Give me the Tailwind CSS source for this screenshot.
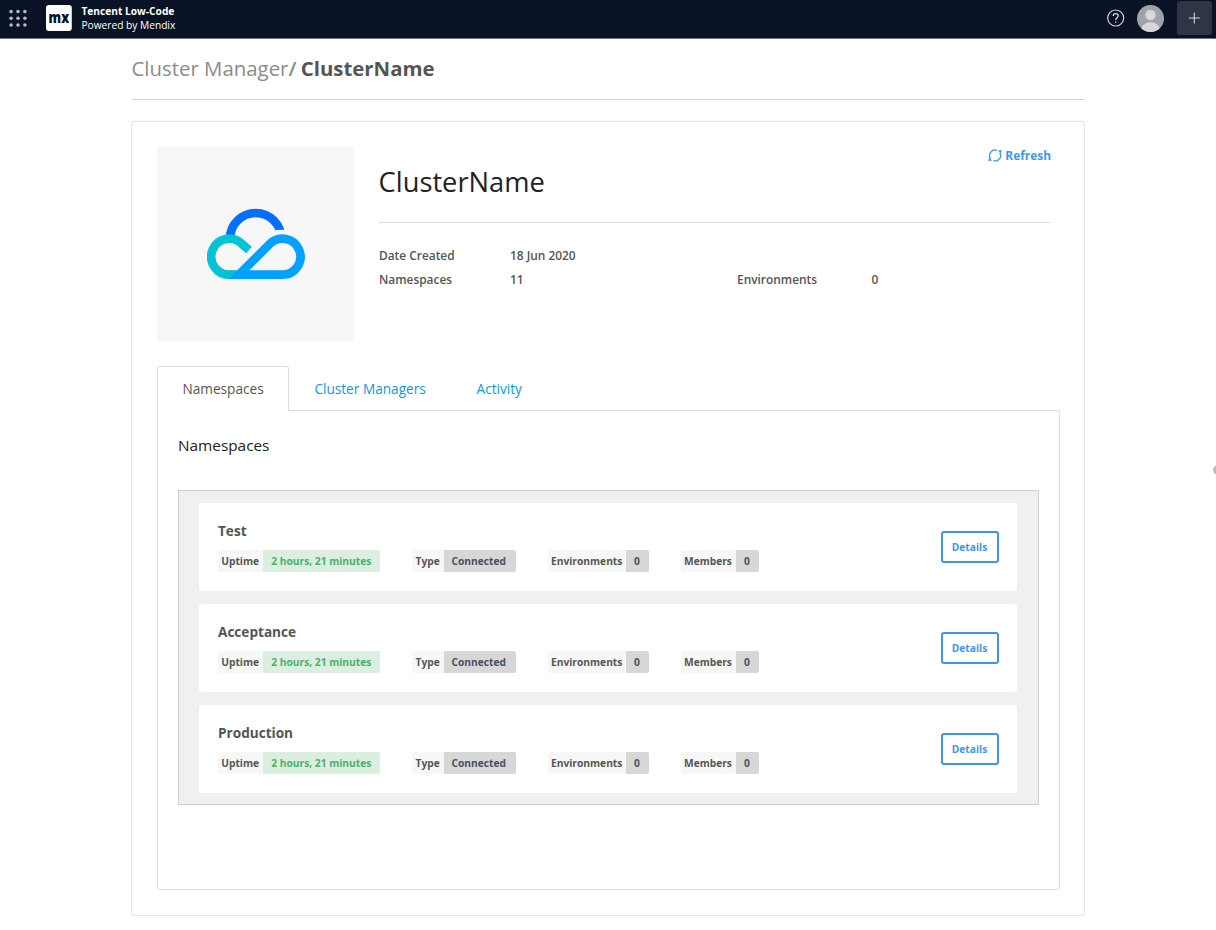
<!DOCTYPE html>
<html lang="en">
<head>
<meta charset="utf-8">
<title>Cluster Manager</title>
<script src="https://cdn.jsdelivr.net/npm/@tailwindcss/browser@4"></script>
</head>
<body class="relative h-[930px] w-[1216px] overflow-hidden bg-white font-['Open_Sans',sans-serif] text-[#555]">

<header class="flex h-[39px] items-start border-b border-[#6c717c] bg-[#0a1326] text-white">
  <svg class="ml-2 mt-2 h-5 w-5" viewBox="0 0 20 20" fill="#b4b8bf">
    <circle cx="3.1" cy="3.6" r="1.8"/><circle cx="10" cy="3.6" r="1.8"/><circle cx="16.9" cy="3.6" r="1.8"/>
    <circle cx="3.1" cy="10.3" r="1.8"/><circle cx="10" cy="10.3" r="1.8"/><circle cx="16.9" cy="10.3" r="1.8"/>
    <circle cx="3.1" cy="17" r="1.8"/><circle cx="10" cy="17" r="1.8"/><circle cx="16.9" cy="17" r="1.8"/>
  </svg>
  <svg class="ml-[18px] mt-[5px] h-[26px] w-[26px] overflow-visible" viewBox="0 0 26 26">
    <rect width="25.8" height="26" rx="3" fill="#fff"/>
    <text x="2.6" y="17.6" textLength="20.6" lengthAdjust="spacingAndGlyphs" font-family="Open Sans, sans-serif" font-weight="800" font-size="16.5" fill="#0a1326">mx</text>
  </svg>
  <div class="ml-[9.4px] mt-1 text-[10.2px] leading-[14px]">
    <div class="font-bold">Tencent Low-Code</div>
    <div>Powered by Mendix</div>
  </div>
  <div class="ml-auto mr-[4.5px] flex items-start">
    <svg class="mt-[9px] h-[18px] w-[18px]" viewBox="0 0 18 18" fill="none" stroke="#d3d5d9" stroke-width="1.2">
      <circle cx="8.700" cy="9" r="8"/>
      <path d="M6.200 7.1C6.200 5.5 7.200 4.6 8.700 4.6s2.5.9 2.5 2.2c0 1.9-2.4 1.9-2.4 4.1" stroke-width="1.3"/>
      <circle cx="8.800" cy="13" r=".5" fill="#d3d5d9" stroke-width=".5"/>
    </svg>
    <svg class="ml-[12px] mt-[4.5px] h-[27px] w-[27px]" viewBox="0 0 27 27">
      <defs><clipPath id="face"><circle cx="13.5" cy="13.5" r="13.5"/></clipPath></defs>
      <g clip-path="url(#face)">
        <rect width="27" height="27" fill="#9fa3a9"/>
        <circle cx="13.5" cy="10" r="5.2" fill="#d6d7da"/>
        <path d="M3.5 28C3.5 21 8 17.3 13.5 17.3S23.500 21 23.500 28Z" fill="#d6d7da"/>
      </g>
    </svg>
    <div class="ml-[13px] mt-px flex h-[34px] w-[34.5px] items-center justify-center rounded-[3px] bg-[#2e3544]">
      <svg class="h-3 w-3" viewBox="0 0 12 12" stroke="#d3d5d9" stroke-width="1.1"><path d="M6.300 .4v11.200M.7 6h11.200"/></svg>
    </div>
  </div>
</header>

<main class="ml-[131px] w-[954px]">
  <h1 class="ml-[0.5px] flex h-[60px] items-center pb-0.5 text-[20.4px] leading-7 text-[#8b8b8b]"><span>Cluster Manager<span class="font-semibold">/</span></span><span class="ml-[4.3px] font-bold text-[#555]">ClusterName</span></h1>
  <div class="ml-px h-px bg-[#d5d5d5]"></div>

  <section class="mt-[21px] h-[795px] rounded-[3px] border border-[#e4e4e4] px-[25px] pt-[25px]">
    <div class="flex">
      <div class="flex h-[194px] w-[197px] shrink-0 items-center justify-center bg-[#f7f7f7]">
        <svg class="h-[72px] w-[98px]" viewBox="51 54 294 216" fill="none" stroke-width="26">
          <defs><clipPath id="arc"><path d="M51 54H345V118L256 120V150H51Z"/></clipPath></defs>
          <path d="M120 146A77 77 0 0 1 274 146" stroke="#006eff" clip-path="url(#arc)"/>
          <path d="M150 254H118A54 54 0 1 1 156 162L177 180" stroke="#00c4d6"/>
          <path d="M147 254L239 162A54 54 0 1 1 277 254Z" stroke="#00a1ff"/>
          <path d="M116 267L141 242L118 241L98 263Z" fill="#14b4cb" fill-opacity=".5" stroke="none"/>
        </svg>
      </div>
      <div class="ml-[25px] w-[672px] text-[11.9px] font-semibold leading-4">
        <div class="flex h-[76px] items-start justify-between border-b border-[#dcdcdc]">
          <h2 class="-ml-[0.4px] mt-[14.5px] text-[27.28px] font-normal leading-10 text-[#222]">ClusterName</h2>
          <a class="flex items-center gap-[3px] font-bold text-[#3f96e8]">
            <svg class="mt-px h-[13px] w-[14px]" viewBox="0 0 14 13" fill="none" stroke="#3f96e8" stroke-width="1.3">
              <path d="M2.500 9.300A5.300 5.300 0 0 1 8.800 1.400M11.700 3.700A5.300 5.300 0 0 1 5.400 11.600"/>
              <path d="M9.900 1.500L13.600 1L13.200 4.600ZM4.200 11.400L.4 12L.9 8.400Z" fill="#3f96e8" stroke="none"/>
            </svg>
            <span>Refresh</span>
          </a>
        </div>
        <dl class="mt-[24px] grid grid-cols-[131px_227px_134.500px_1fr] gap-y-2">
          <dt>Date Created</dt><dd>18 Jun 2020</dd><dt></dt><dd></dd>
          <dt>Namespaces</dt><dd>11</dd><dt>Environments</dt><dd>0</dd>
        </dl>
      </div>
    </div>

    <nav class="relative z-10 mt-[25px] flex h-[45px] text-[13.64px] leading-[45px]">
      <a class="h-[45px] w-[132px] rounded-t-[3px] border border-b-0 border-[#dcdcdc] bg-white pl-[24.5px] leading-[43px]">Namespaces</a>
      <a class="ml-[25.4px] text-[#0f98dc]">Cluster Managers</a>
      <a class="ml-[50.800px] text-[#0f98dc]">Activity</a>
    </nav>
    <div class="-mt-px h-[480px] w-[903px] rounded-[3px] rounded-tl-none border border-[#dcdcdc] px-5">
      <h3 class="h-[79px] pt-[23px] text-[15.35px] leading-[22px] text-[#222]">Namespaces</h3>
      <div id="list" class="flex h-[315px] w-[861px] flex-col gap-[12.500px] border border-[#cdcdcd] bg-[#f0f0f0] pl-5 pt-3">
        <article class="flex h-[88.300px] w-[818px] justify-between rounded-[3px] bg-white pl-[19px] pr-[18.500px]">
          <div>
            <h4 class="mt-[18px] text-[13.6px] font-bold leading-5">Test</h4>
            <div class="tags mt-[9.300px] flex gap-8 text-[10.23px] font-bold leading-[22px]"></div>
          </div>
          <button class="mt-[28px] h-8 w-[58px] rounded-[3px] border-2 border-[#3f96e8] pt-0.5 text-[10.23px] font-bold text-[#3f96e8]">Details</button>
        </article>
      </div>
    </div>
  </section>
</main>

<div class="absolute left-[1213px] top-[465px] h-2.5 w-2.5 rounded-full bg-[#bcbcbc]"></div>

<template id="tags">
  <div class="flex"><span class="w-[45px] rounded-l-[2px] bg-[#f7f7f7] pl-[3.200px]">Uptime</span><span class="w-[117px] rounded-r-[2px] bg-[#dbeedf] pl-[8.300px] text-[#4bb16b]">2 hours, 21 minutes</span></div>
  <div class="flex"><span class="w-[31.500px] rounded-l-[2px] bg-[#f7f7f7] pl-[3.600px]">Type</span><span class="w-[72px] rounded-r-[2px] bg-[#d7d7d7] pl-2 text-[#4a5060]">Connected</span></div>
  <div class="flex"><span class="w-[78.500px] rounded-l-[2px] bg-[#f7f7f7] pl-[3.500px]">Environments</span><span class="w-[22.500px] rounded-r-[2px] bg-[#d7d7d7] pl-2 text-[#4a5060]">0</span></div>
  <div class="flex"><span class="w-[55.500px] rounded-l-[2px] bg-[#f7f7f7] pl-[3.500px]">Members</span><span class="w-[22.500px] rounded-r-[2px] bg-[#d7d7d7] pl-2 text-[#4a5060]">0</span></div>
</template>
<script>
  const list = document.getElementById('list');
  const first = list.querySelector('article');
  first.querySelector('.tags').append(document.getElementById('tags').content.cloneNode(true));
  for (const name of ['Acceptance', 'Production']) {
    const row = first.cloneNode(true);
    row.querySelector('h4').textContent = name;
    list.append(row);
  }
</script>
</body>
</html>
